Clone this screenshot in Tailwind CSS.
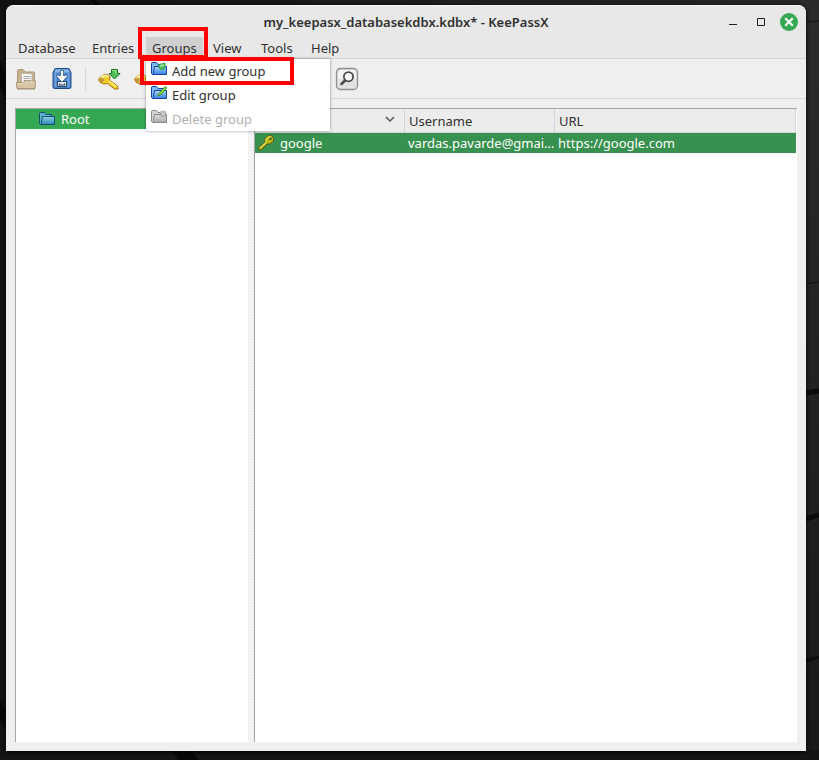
<!DOCTYPE html>
<html lang="en">
<head>
<meta charset="utf-8">
<meta name="viewport" content="width=device-width, initial-scale=1">
<title>my_keepasx_databasekdbx.kdbx* - KeePassX</title>
<script src="https://cdn.jsdelivr.net/npm/@tailwindcss/browser@4"></script>
</head>
<body class="relative flex min-h-screen bg-[#161616] pt-[5px] pr-[13px] pb-[9px] pl-[6px] text-[13px] leading-5 text-[#303030] font-['Noto_Sans','Open_Sans',sans-serif]">
<!-- Desktop wallpaper -->
<svg class="absolute inset-0 h-full w-full" viewBox="0 0 819 760" preserveAspectRatio="none" aria-hidden="true">
  <defs>
    <linearGradient id="wall" x2="1" y2="0"><stop offset="0" stop-color="#121212"/><stop offset="1" stop-color="#272727"/></linearGradient>
    <linearGradient id="edge" x2="0" y2="1"><stop offset="0" stop-color="#2b2b2b"/><stop offset="1" stop-color="#191919"/></linearGradient>
  </defs>
  <path fill="url(#wall)" d="M0 0h819v760H0z"/>
  <path fill="url(#edge)" d="M800 0h19v760h-19z"/>
  <path fill="#151515" d="M0 750h819v10H0z"/>
  <path fill="#080808" d="M0 60l6 18v20L0 86zM0 700l6 12v16L0 722zM172 750h20l6 10h-20zM90 0h6l4 5h-6z"/>
  <path fill="none" stroke="#111" d="M806 22l13-1M806 284l13-2"/>
  <path fill="none" stroke="#0b0b0b" stroke-width="5" d="M806 393l13-2M806 519l13-4"/>
  <path fill="none" stroke="#0d0d0d" stroke-width="3" d="M806 661l13-4"/>
</svg>

<!-- Shared icon fills -->
<svg class="absolute size-0" aria-hidden="true">
  <defs>
    <linearGradient id="blueFront" x2="0" y2="1"><stop offset="0" stop-color="#b5dcff"/><stop offset="1" stop-color="#2f7fe6"/></linearGradient>
    <linearGradient id="greyFront" x2="0" y2="1"><stop offset="0" stop-color="#e2e2e2"/><stop offset="1" stop-color="#a9a9a9"/></linearGradient>
    <linearGradient id="tealFront" x2="0" y2="1"><stop offset="0" stop-color="#8fd3e8"/><stop offset="1" stop-color="#2a86b4"/></linearGradient>
  </defs>
</svg>

<main class="relative flex min-w-0 flex-1 flex-col rounded-t-[8px] bg-[#efefef] shadow-[0_1px_4px_#000]">
  <header class="grid h-8 grid-cols-[1fr_auto_1fr] items-center rounded-t-[8px] border-t border-[#f6f6f6] bg-[#e8e8e8] px-2">
    <span></span>
    <h1 class="text-[13px] font-semibold text-[#303030]">my_keepasx_databasekdbx.kdbx* - KeePassX</h1>
    <div class="flex items-center justify-end gap-2">
      <button aria-label="Minimize" class="grid size-5 place-items-center"><svg width="10" height="10"><path d="M0 7h8v1H0z" fill="#202020"/></svg></button>
      <button aria-label="Maximize" class="grid size-5 place-items-center"><svg width="10" height="10"><path d="M.5 1.500h7v7h-7z" fill="none" stroke="#202020"/></svg></button>
      <button aria-label="Close" class="grid size-[18px] place-items-center rounded-full bg-[#35a854]"><svg width="10" height="10"><path d="M2 2l6 6M8 2l-6 6" stroke="#fff" stroke-width="2.200" stroke-linecap="square"/></svg></button>
    </div>
  </header>

  <nav class="relative z-10 grid h-[22px] grid-cols-[74px_60px_61px_48px_50px_auto] justify-start border-b border-[#d4d4d4] bg-[#e8e8e8] pl-[6px]" aria-label="Menu bar">
    <button class="justify-self-start px-[6px]">Database</button>
    <button class="justify-self-start px-[6px]">Entries</button>
    <div class="relative justify-self-start">
      <button class="h-[21px] bg-[#d0d0d0] px-[6px]" aria-expanded="true">Groups</button>
      <div role="menu" class="absolute top-[22px] left-0 flex w-[184px] flex-col bg-white shadow-[0_0_3px_rgba(0,0,0,0.4)]">
        <button role="menuitem" class="flex h-6 items-center gap-1 pl-[5px]">
          <svg class="mb-1" width="17" height="16" viewBox="0 0 17 16"><path d="M.5 12.500V2.500Q.5 1.500 1.500 1.500H5.500l1.500 2H12.500v10H1.500z" fill="#7db9f7" stroke="#173f9c"/><path d="M2 13.500L3.500 5.500h12v8z" fill="url(#blueFront)" stroke="#173f9c"/><path d="M8 3.500l6-1.500v5.500l-3.500 1.500L8 7z" fill="#4fbb5b" stroke="#2f9449" stroke-width=".8"/><path d="M9 4l4-.8V5L9 6z" fill="#a5e59d"/></svg>Add new group
        </button>
        <button role="menuitem" class="flex h-6 items-center gap-1 pl-[5px]">
          <svg class="mb-1" width="17" height="16" viewBox="0 0 17 16"><path d="M.5 12.500V2.500Q.5 1.500 1.500 1.500H5.500l1.500 2H12.500v10H1.500z" fill="#7db9f7" stroke="#173f9c"/><path d="M2 13.500L3.500 5.500h12v8z" fill="url(#blueFront)" stroke="#173f9c"/><path d="M7.500 9L14 1.500 16 3l-6.500 7-2.500 1z" fill="#86dd4b" stroke="#347c1d" stroke-width=".8"/></svg>Edit group
        </button>
        <button role="menuitem" disabled class="flex h-6 items-center gap-1 pl-[5px] text-[#b1b1b1]">
          <svg class="mb-1" width="17" height="16" viewBox="0 0 17 16"><path d="M.5 12.500V2.500Q.5 1.500 1.500 1.500H5.500l1.500 2H12.500v10H1.500z" fill="#d2d2d2" stroke="#8b8b8b"/><path d="M2 13.500L3.500 5.500h12v8z" fill="url(#greyFront)" stroke="#8b8b8b"/><path d="M9.500 2.500l5 5M14.500 2.500l-5 5" stroke="#868686" stroke-width="3"/><path d="M9.500 2.500l5 5M14.500 2.500l-5 5" stroke="#d5d5d5" stroke-width="1.500"/></svg>Delete group
        </button>
      </div>
      <!-- Highlight frames -->
      <div class="pointer-events-none absolute -top-[10px] -left-2 h-8 w-[70px] border-4 border-[#f00]"></div>
      <div class="pointer-events-none absolute top-5 -left-[6px] h-7 w-[154px] border-4 border-[#f00]"></div>
    </div>
    <button class="justify-self-start px-[6px]">View</button>
    <button class="justify-self-start px-[6px]">Tools</button>
    <button class="justify-self-start px-[6px]">Help</button>
  </nav>

  <div role="toolbar" aria-label="Tools" class="flex h-10 items-center border-b border-[#d8d8d8] pl-2">
    <button aria-label="Open database" class="size-6">
      <svg width="24" height="24" viewBox="0 0 24 24"><path d="M3.500 15V3.500Q3.500 2.500 4.500 2.500h4.500l2 2.500h8.500q1 0 1 1V16H3.500z" fill="#c8b18e" stroke="#ab9574"/><path d="M7.500 6.500h10.500V17H7.500z" fill="#f8f8f6" stroke="#b6b4ac"/><path d="M9.500 9.500h7M9.500 11.500h7M9.500 13.500h7" stroke="#a3a3a0"/><path d="M2.500 15.500h7l1.500-1.500h10.500L21 21.500H3z" fill="#d8c5a5" stroke="#ab9574"/><path d="M3.500 16.500H10l1.500-1.500h9" fill="none" stroke="#eadbc1"/><path d="M3 22.500h18" stroke="#c6c3bd"/></svg>
    </button>
    <button aria-label="Save database" class="ml-3 size-6">
      <svg width="24" height="24" viewBox="0 0 24 24"><path d="M5 1.500h14l2 4V20q0 1.500-1.500 1.500h-15Q3 21.500 3 20V5.500z" fill="#4682c9" stroke="#214c88"/><path d="M5.500 2.500h13l1 3h-15z" fill="#8db7e8"/><path d="M4.500 6v14h2V6M17.500 6v14h2V6" fill="#6ba2df"/><path d="M7.500 14.500h9v5h-9z" fill="#e6e9ed" stroke="#28476f"/><path d="M9.500 16.500v1.500h5v-1.500" fill="none" stroke="#35475c" stroke-width="1.200"/><path d="M10.500 3.500h3v5H15l2-1v2.500L12 15l-5-5V7.500l2 1h1.500z" fill="#fff" stroke="#315d91" stroke-width=".8"/></svg>
    </button>
    <span class="mx-[11px] h-6 w-px bg-[#d9d9d9]"></span>
    <button aria-label="Add new entry" class="size-6">
      <svg width="24" height="24" viewBox="0 0 24 24"><path d="M2 11.500L6.500 7.500q4-1 6 1.500 1 2 0 4l8 6 .5 3h-3.500l-7-5.500Q6 18 3 15q-2-2-1-3.500z" fill="#f9cf27" stroke="#a8690f"/><path d="M4 11l3-2.500q3-.5 4.500 1.500" fill="none" stroke="#fff6a0" stroke-width="2"/><circle cx="5" cy="13" r="1.300" fill="#fff" stroke="#936110"/><path d="M12 14l7 5.500" stroke="#ffec6b" stroke-width="2"/><path d="M14.500 2.500h6v4h2.500L17.500 12l-5.500-5.500h2.500z" fill="#4fbc55" stroke="#187a28"/><path d="M15.500 3.500h3.500V7" fill="none" stroke="#a8e898"/></svg>
    </button>
    <button aria-label="Edit entry" class="ml-3 size-6">
      <svg width="24" height="24" viewBox="0 0 24 24"><path d="M2 11.500L6.500 7.500q4-1 6 1.500 1 2 0 4l8 6 .5 3h-3.500l-7-5.500Q6 18 3 15q-2-2-1-3.500z" fill="#f9cf27" stroke="#a8690f"/><path d="M4 11l3-2.500q3-.5 4.500 1.500" fill="none" stroke="#fff6a0" stroke-width="2"/><circle cx="5" cy="13" r="1.300" fill="#fff" stroke="#936110"/></svg>
    </button>
    <button aria-label="Search" class="ml-[178px] size-6">
      <svg width="24" height="24" viewBox="0 0 24 24"><rect x="1.500" y="1.500" width="21" height="21" rx="4" fill="#e0e3e0" stroke="#8e918e" stroke-width="1.300"/><path d="M3 12V5.500q0-2.500 2.500-2.500h13q2.500 0 2.500 2.500V12z" fill="#f2f3f2"/><circle cx="13.500" cy="9.700" r="4.600" fill="#f7f8f7" stroke="#4b4b4b" stroke-width="1.800"/><path d="M10 13.500L6.500 17" stroke="#4b4b4b" stroke-width="2.500" stroke-linecap="round"/></svg>
    </button>
  </div>

  <div class="flex flex-1 px-[9px] pt-[9px] pb-[9px]">
    <aside class="w-[233px] shrink-0 border-t border-l border-[#a5a5a5] bg-white" aria-label="Groups tree">
      <button class="flex h-5 w-full items-center gap-[6px] bg-[#35a854] pl-[23px] text-white">
        <svg width="16" height="16" viewBox="0 0 16 16"><path d="M.5 12.500V2.500Q.5 1.500 1.500 1.500H5.500l1.500 2H12.500v10H1.500z" fill="#5cb1cf" stroke="#11506e"/><path d="M2 13.500L3.500 5.500h12v8z" fill="url(#tealFront)" stroke="#11506e"/></svg>Root
      </button>
    </aside>
    <svg class="w-[6px] shrink-0 self-stretch" height="100%" aria-hidden="true"><defs><pattern id="dots" width="6" height="6" patternUnits="userSpaceOnUse"><path d="M1 1h1v1H1zM4 1h1v1H4zM2 2h1v1H2zM1 4h1v1H1zM4 4h1v1H4zM2 5h1v1H2z" fill="#fff"/></pattern></defs><rect width="6" height="100%" fill="url(#dots)"/></svg>
    <section class="min-w-0 flex-1 border-t border-l border-[#a5a5a5] bg-white pr-px">
      <table class="w-full table-fixed border-separate border-spacing-0 text-left">
        <colgroup><col class="w-[150px]"><col class="w-[150px]"><col></colgroup>
        <thead class="bg-[#ececec]">
          <tr class="h-6">
            <th class="border-r border-b border-[#d4d4d4] p-0 font-normal"><button class="flex w-full items-center justify-between pr-2 pl-1">Title<svg class="mb-1" width="12" height="12" viewBox="0 0 12 12"><path d="M2 4l4 4 4-4" fill="none" stroke="#555" stroke-width="1.500"/></svg></button></th>
            <th class="border-r border-b border-[#d4d4d4] p-0 pl-1 font-normal">Username</th>
            <th class="border-r border-b border-[#d4d4d4] p-0 pl-1 font-normal">URL</th>
          </tr>
        </thead>
        <tbody>
          <tr class="h-5 bg-[#37914f] text-white">
            <td class="p-0"><div class="flex items-center gap-[6px] pl-[3px]"><svg width="16" height="16" viewBox="0 0 16 16"><path d="M1 15l-.500-2L7 7V3.500L10 .8h3.500L15.500 3v3L12 9H9l-6 6z" fill="#b8b717" stroke="#5b5710"/><path d="M2 13l6-5.500V4l2.500-2h3" fill="none" stroke="#e1db45" stroke-width="1.300"/><circle cx="12.500" cy="3.800" r="1.200" fill="#385e35"/></svg>google</div></td>
            <td class="p-0 pl-[3px] whitespace-nowrap">vardas.pavarde@gmai…</td>
            <td class="truncate p-0 px-[3px]"><a href="https://google.com">https://google.com</a></td>
          </tr>
        </tbody>
      </table>
    </section>
  </div>
</main>
</body>
</html>
